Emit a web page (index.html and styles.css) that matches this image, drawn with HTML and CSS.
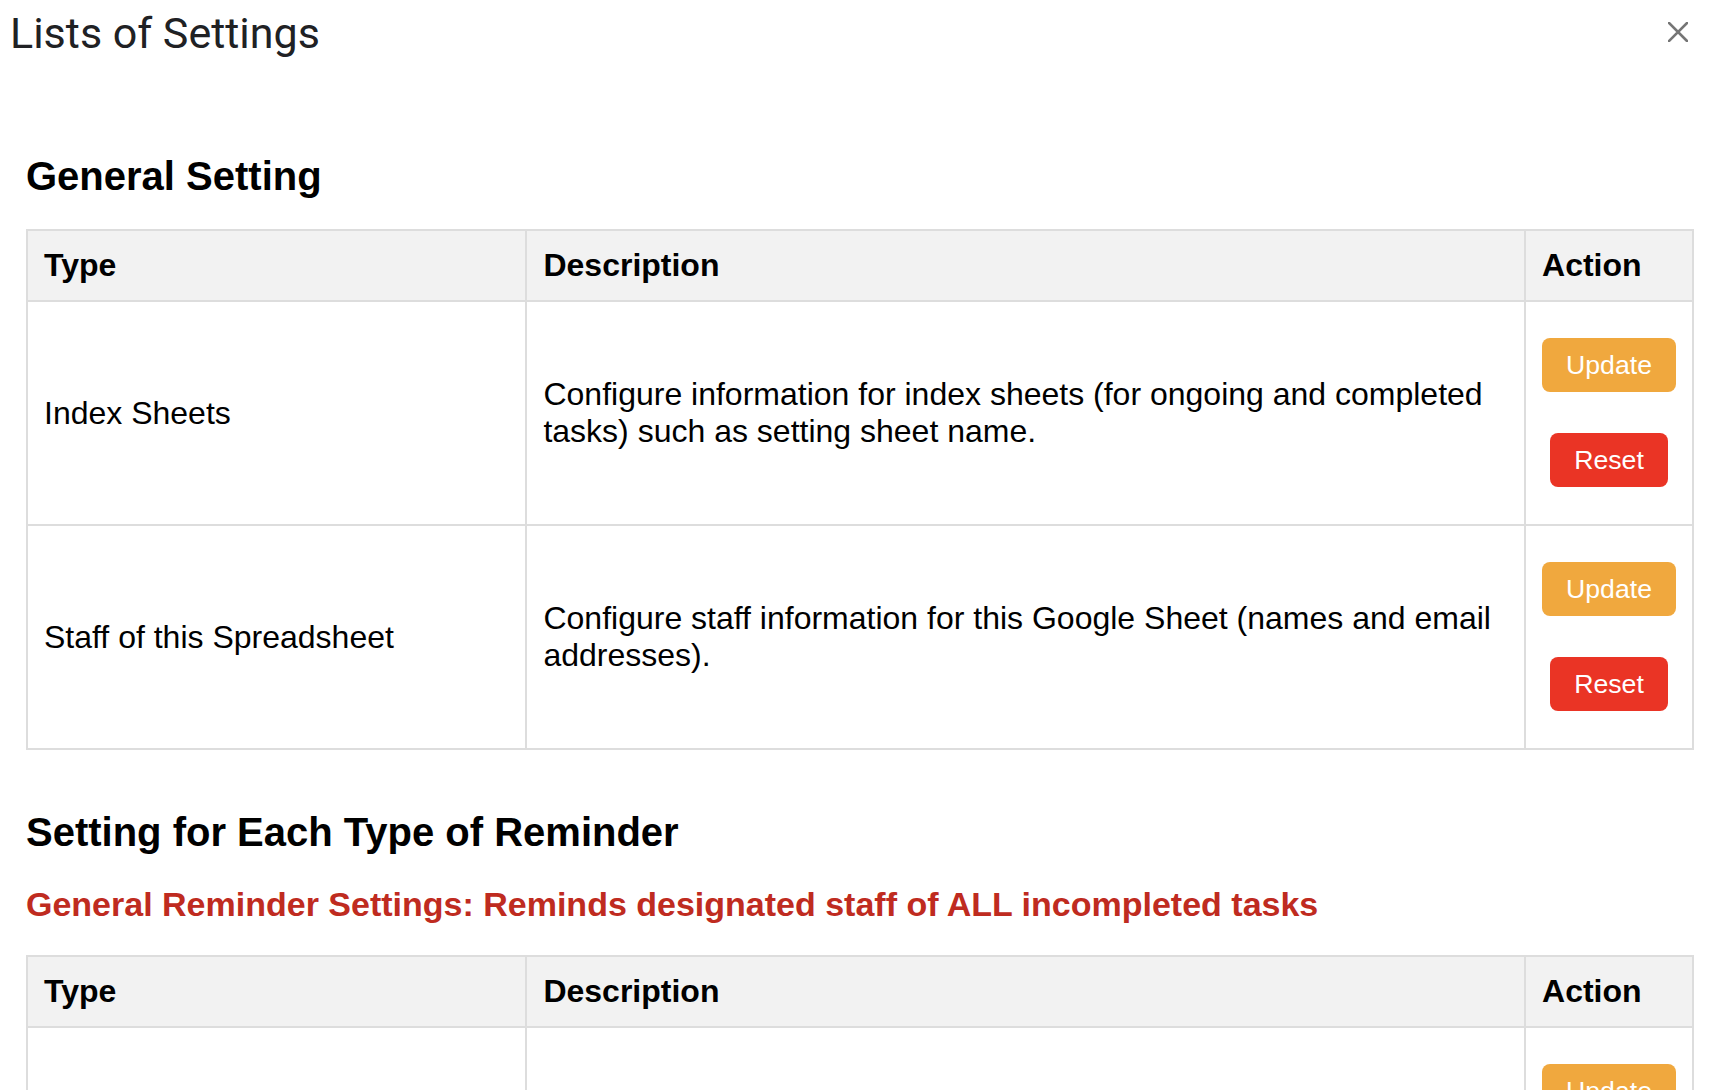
FILE: index.html
```html
<!DOCTYPE html>
<html lang="en">
<head>
<meta charset="utf-8">
<title>Lists of Settings</title>
<link rel="stylesheet" href="styles.css">
</head>
<body>
<div class="dialog">
  <header class="dialog-header">
    <h1 class="dialog-title">Lists of Settings</h1>
    <button class="close-btn" aria-label="Close">
      <svg width="20" height="20" viewBox="0 0 20 20"><path d="M1 1 L19 19 M19 1 L1 19" stroke="#757575" stroke-width="2.6" stroke-linecap="square"/></svg>
    </button>
  </header>
  <main class="content">
    <h2 class="section-title first">General Setting</h2>
    <table class="settings">
      <colgroup><col class="c-type"><col class="c-desc"><col class="c-act"></colgroup>
      <thead>
        <tr><th>Type</th><th>Description</th><th>Action</th></tr>
      </thead>
      <tbody>
        <tr>
          <td>Index Sheets</td>
          <td>Configure information for index sheets (for ongoing and completed tasks) such as setting sheet name.</td>
          <td class="actions"><div class="btns"><button class="btn update">Update</button><button class="btn reset">Reset</button></div></td>
        </tr>
        <tr>
          <td>Staff of this Spreadsheet</td>
          <td>Configure staff information for this Google Sheet (names and email addresses).</td>
          <td class="actions"><div class="btns"><button class="btn update">Update</button><button class="btn reset">Reset</button></div></td>
        </tr>
      </tbody>
    </table>

    <h2 class="section-title second">Setting for Each Type of Reminder</h2>
    <h3 class="sub-title">General Reminder Settings: Reminds designated staff of ALL incompleted tasks</h3>
    <table class="settings">
      <colgroup><col class="c-type"><col class="c-desc"><col class="c-act"></colgroup>
      <thead>
        <tr><th>Type</th><th>Description</th><th>Action</th></tr>
      </thead>
      <tbody>
        <tr>
          <td>General Reminder</td>
          <td>Configure the schedule and recipients of reminders for all incompleted tasks.</td>
          <td class="actions"><div class="btns"><button class="btn update">Update</button><button class="btn reset">Reset</button></div></td>
        </tr>
      </tbody>
    </table>
  </main>
</div>
</body>
</html>
```

FILE: styles.css
```css
html, body {
  margin: 0;
  padding: 0;
  background: #ffffff;
}

body {
  font-family: "Liberation Sans", Arial, sans-serif;
  color: #000;
}

.dialog {
  padding: 8px 22px 40px 10px;
}

.dialog-header {
  display: flex;
  justify-content: space-between;
  align-items: flex-start;
}

.dialog-title {
  margin: 0;
  font-family: Roboto, "Noto Sans", sans-serif;
  font-weight: 400;
  font-size: 43px;
  line-height: 51px;
  color: #202124;
  letter-spacing: 0;
}

.close-btn {
  margin: 14px 6px 0 0;
  padding: 0;
  border: 0;
  background: none;
  width: 20px;
  height: 20px;
  display: flex;
}

.content {
  padding-left: 16px;
}

.section-title {
  margin: 0;
  font-size: 40px;
  font-weight: 700;
  line-height: 46px;
}

.section-title.first {
  margin-top: 94px;
  margin-bottom: 30px;
}

.section-title.second {
  margin-top: 59px;
  margin-bottom: 30px;
}

.sub-title {
  margin: 0 0 31px 0;
  font-size: 34px;
  line-height: 39px;
  font-weight: 700;
  color: #bf2b20;
}

.settings {
  width: 100%;
  border-collapse: collapse;
  font-size: 32px;
}

.c-type { width: 30%; }
.c-desc { width: 60%; }
.c-act { width: 10%; }

.settings th,
.settings td {
  border: 2px solid #dddddd;
  padding: 16px;
  text-align: left;
  vertical-align: middle;
  line-height: 37px;
}

.settings th {
  background: #f2f2f2;
  font-weight: 700;
}

.settings td.actions {
  padding: 36px 16px 37px;
}

.btns {
  display: flex;
  flex-direction: column;
  align-items: center;
  gap: 41px;
}

.btn {
  font-family: "Liberation Sans", Arial, sans-serif;
  font-size: 26.67px;
  line-height: 30px;
  padding: 12px 24px;
  border: 0;
  border-radius: 8px;
  color: #ffffff;
  cursor: pointer;
}

.btn.update {
  background: #f0a83e;
}

.btn.reset {
  background: #ea3425;
}
```
